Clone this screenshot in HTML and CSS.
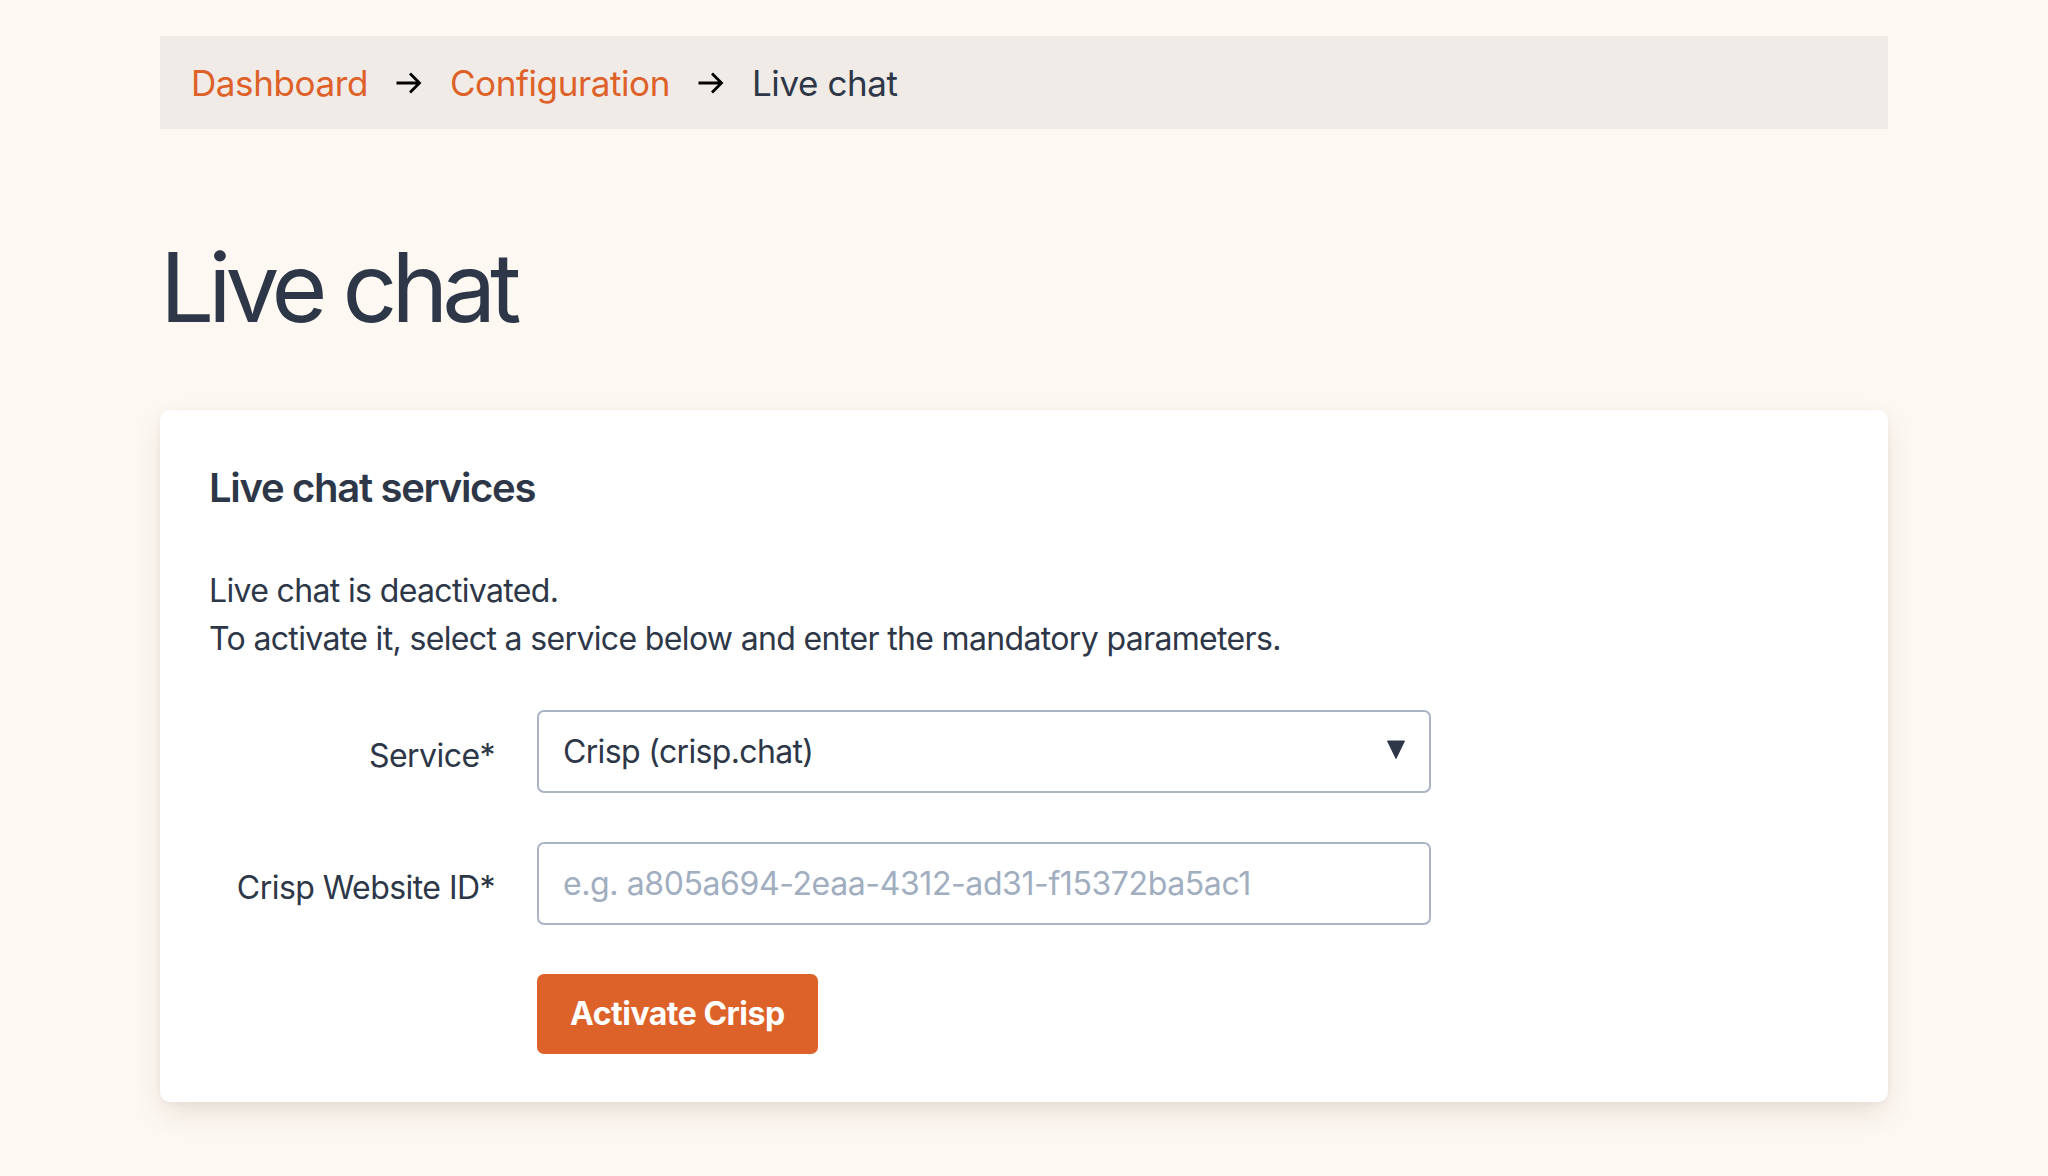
FILE: index.html
```html
<!DOCTYPE html>
<html lang="en">
<head>
<meta charset="utf-8">
<title>Live chat</title>
<link rel="stylesheet" href="styles.css">
</head>
<body>
<div class="page">
  <nav class="crumbs">
    <a class="crumb-link" href="#">Dashboard</a>
    <svg class="crumb-arrow" width="26" height="22" viewBox="0 0 26 22" aria-hidden="true"><path d="M0.5 11 H23.5 M14 1.5 L23.5 11 L14 20.5" fill="none" stroke="#000" stroke-width="2.8"/></svg>
    <a class="crumb-link" href="#">Configuration</a>
    <svg class="crumb-arrow" width="26" height="22" viewBox="0 0 26 22" aria-hidden="true"><path d="M0.5 11 H23.5 M14 1.5 L23.5 11 L14 20.5" fill="none" stroke="#000" stroke-width="2.8"/></svg>
    <span class="crumb-current">Live chat</span>
  </nav>

  <h1 class="title">Live chat</h1>

  <section class="card">
    <h2 class="card-title">Live chat services</h2>
    <p class="card-text">Live chat is deactivated.<br>To activate it, select a service below and enter the mandatory parameters.</p>
    <form class="form">
      <label class="form-label" for="service">Service*</label>
      <div class="select-wrap">
        <select id="service" class="select">
          <option>Crisp (crisp.chat)</option>
        </select>
        <svg class="select-caret" width="18" height="19" viewBox="0 0 18 19" aria-hidden="true"><path d="M0.5 1 H17.5 L9 18.5 Z" fill="#2d3748" stroke="#2d3748" stroke-width="1" stroke-linejoin="round"/></svg>
      </div>
      <label class="form-label" for="website">Crisp Website ID*</label>
      <input id="website" class="input" type="text" placeholder="e.g. a805a694-2eaa-4312-ad31-f15372ba5ac1">
      <div class="form-spacer"></div>
      <div class="form-actions"><button type="button" class="button">Activate Crisp</button></div>
    </form>
  </section>
</div>
</body>
</html>
```

FILE: styles.css
```css
html, body {
  margin: 0;
  padding: 0;
}
body {
  background: #fdf8f2;
  color: #2d3748;
  font-family: Inter, "Noto Sans", "Liberation Sans", sans-serif;
}
.page {
  width: 1728px;
  margin: 0 auto;
  padding-top: 36px;
}
.crumbs {
  display: flex;
  align-items: center;
  gap: 28px;
  height: 93px;
  padding: 0 31px;
  background: #f0ebe6;
  font-size: 35px;
  line-height: 48px;
  letter-spacing: -0.4px;
}
.crumb-link {
  color: #dd6128;
  text-decoration: none;
}
.crumb-current {
  color: #2d3748;
}
.crumb-arrow {
  display: block;
  flex: none;
}
.title {
  margin: 110px 0 0;
  font-size: 96px;
  line-height: 96px;
  font-weight: 400;
  letter-spacing: -6px;
}
.card {
  margin-top: 75px;
  margin-bottom: 80px;
  background: #fff;
  border-radius: 10px;
  padding: 48px 48px 48px 49px;
  box-shadow: 0 12px 30px -4px rgba(70, 50, 30, 0.14), 0 2px 6px rgba(70, 50, 30, 0.04);
}
.card-title {
  margin: 0;
  font-size: 40px;
  line-height: 60px;
  font-weight: 600;
  letter-spacing: -1.3px;
}
.card-text {
  margin: 49px 0 0;
  font-size: 32px;
  line-height: 48px;
  letter-spacing: -0.65px;
}
.form {
  margin-top: 47px;
  display: grid;
  grid-template-columns: 286px 894px;
  column-gap: 42px;
  row-gap: 49px;
  align-items: start;
}
.form-label {
  padding-top: 22px;
  text-align: right;
  font-size: 32px;
  line-height: 48px;
  letter-spacing: -0.55px;
}
.select-wrap {
  position: relative;
}
.select,
.input {
  display: block;
  box-sizing: border-box;
  width: 894px;
  height: 83px;
  margin: 0;
  padding: 0 24px;
  border: 2px solid #a9b4c4;
  border-radius: 7px;
  background: #fff;
  color: #2d3748;
  font-family: inherit;
  font-size: 32px;
  line-height: 48px;
  letter-spacing: -0.65px;
  outline: none;
}
.input {
  letter-spacing: -0.4px;
}
.select {
  -webkit-appearance: none;
  appearance: none;
}
.input::placeholder {
  color: #a0aec0;
  opacity: 1;
}
.select-caret {
  position: absolute;
  top: 30px;
  right: 26px;
  pointer-events: none;
}
.button {
  display: block;
  height: 80px;
  padding: 0 33px;
  border: none;
  border-radius: 7px;
  background: #dd6229;
  color: #fff;
  font-family: inherit;
  font-size: 32px;
  font-weight: 700;
  line-height: 48px;
  letter-spacing: -0.5px;
  cursor: pointer;
}
```
